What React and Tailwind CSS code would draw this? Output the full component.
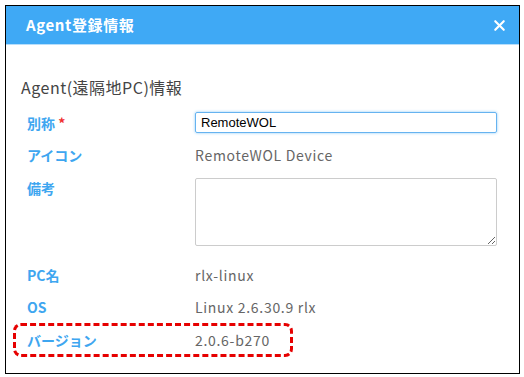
import { X } from "lucide-react";

const rows = [
  { label: "PC名", value: "rlx-linux" },
  { label: "OS", value: "Linux 2.6.30.9 rlx" },
];

const Label = ({ children }) => (
  <div className="w-[168px] shrink-0 text-[14px] font-bold leading-[20px] text-[#3ea6f0]">{children}</div>
);

const Value = ({ children }) => (
  <span className="text-[14px] leading-[20px] tracking-[0.7px] text-[#666]">{children}</span>
);

export default function App() {
  return (
    <div className="pl-[5px] pt-[5px] bg-white" style={{ fontFamily: '"Noto Sans CJK JP", "Noto Sans", sans-serif' }}>
      <div className="w-[515px] h-[369px] border border-black bg-white">
        {/* header */}
        <div className="h-[39px] flex items-center justify-between pl-[20px] pr-[11px] bg-[#3fa9f5] border-b border-[#b7defb]">
          <h1 className="text-[15px] font-bold tracking-[0.6px] text-white">Agent登録情報</h1>
          <X className="w-[17px] h-[17px] text-white" strokeWidth={3} />
        </div>

        <div className="pt-[32px] pl-[15px]">
          <h2 className="text-[16px] leading-[20px] tracking-[0.5px] text-[#444]">Agent(遠隔地PC)情報</h2>

          <div className="pl-[6px] mt-[15px] flex items-center">
            <Label>
              別称 <span className="text-[#f03030]">*</span>
            </Label>
            <input
              defaultValue="RemoteWOL"
              className="w-[302px] h-[21px] px-[5px] text-[13px] text-black border border-[#66b3f0] rounded-[2px] shadow-[0_0_3px_#8cc8f5] outline-none"
              style={{ fontFamily: '"Liberation Sans", Arial, sans-serif' }}
            />
          </div>

          <div className="pl-[6px] mt-[12px] flex items-center">
            <Label>アイコン</Label>
            <Value>RemoteWOL Device</Value>
          </div>

          <div className="pl-[6px] mt-[13px] flex items-start">
            <Label>備考</Label>
            <textarea className="w-[302px] h-[68px] border border-[#ccc] rounded-[2px] outline-none" />
          </div>

          {rows.map((r, i) => (
            <div key={r.label} className={`pl-[6px] flex items-center ${i === 0 ? "mt-[19px]" : "mt-[12px]"}`}>
              <Label>{r.label}</Label>
              <Value>{r.value}</Value>
            </div>
          ))}

          <div className="relative ml-[6px] mt-[13px] flex items-center">
            <span className="absolute left-[-14px] top-[-7px] w-[280px] h-[34px] border-[3px] border-dashed border-[#e60000] rounded-[8px]" />
            <Label>バージョン</Label>
            <Value>2.0.6-b270</Value>
          </div>
        </div>
      </div>
    </div>
  );
}
